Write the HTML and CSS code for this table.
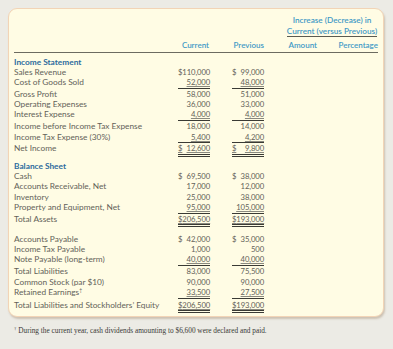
FILE: index.html
```html
<!DOCTYPE html>
<html>
<head>
<meta charset="utf-8">
<link rel="stylesheet" href="styles.css">
</head>
<body>
<div class="card">
  <div class="row top">
    <div class="inc">Increase (Decrease) in<br><span class="cvp">Current (versus Previous)</span></div>
  </div>
  <div class="row head">
    <span></span>
    <span class="h cur">Current</span>
    <span class="h">Previous</span>
    <span class="h">Amount</span>
    <span class="h">Percentage</span>
  </div>

  <div class="row sec"><span class="lbl">Income Statement</span></div>
  <div class="row"><span>Sales Revenue</span><span class="n"><i>$</i><b>110,000</b></span><span class="n"><i>$</i><b>99,000</b></span></div>
  <div class="row ul"><span>Cost of Goods Sold</span><span class="n"><b class="u">52,000</b></span><span class="n"><b class="u">48,000</b></span></div>
  <div class="row"><span>Gross Profit</span><span class="n"><b>58,000</b></span><span class="n"><b>51,000</b></span></div>
  <div class="row"><span>Operating Expenses</span><span class="n"><b>36,000</b></span><span class="n"><b>33,000</b></span></div>
  <div class="row ul"><span>Interest Expense</span><span class="n"><b class="u">4,000</b></span><span class="n"><b class="u">4,000</b></span></div>
  <div class="row"><span>Income before Income Tax Expense</span><span class="n"><b>18,000</b></span><span class="n"><b>14,000</b></span></div>
  <div class="row ul"><span>Income Tax Expense (30%)</span><span class="n"><b class="u">5,400</b></span><span class="n"><b class="u">4,200</b></span></div>
  <div class="row dbl ni"><span>Net Income</span><span class="n"><i class="u">$</i><b class="u">12,600</b></span><span class="n"><i class="u">$</i><b class="u">9,800</b></span></div>

  <div class="row sec"><span class="lbl">Balance Sheet</span></div>
  <div class="row"><span>Cash</span><span class="n"><i>$</i><b>69,500</b></span><span class="n"><i>$</i><b>38,000</b></span></div>
  <div class="row"><span>Accounts Receivable, Net</span><span class="n"><b>17,000</b></span><span class="n"><b>12,000</b></span></div>
  <div class="row"><span>Inventory</span><span class="n"><b>25,000</b></span><span class="n"><b>38,000</b></span></div>
  <div class="row ul"><span>Property and Equipment, Net</span><span class="n"><b class="u">95,000</b></span><span class="n"><b class="u">105,000</b></span></div>
  <div class="row dbl ta"><span>Total Assets</span><span class="n"><i class="u">$</i><b class="u">206,500</b></span><span class="n"><i class="u">$</i><b class="u">193,000</b></span></div>

  <div class="row"><span>Accounts Payable</span><span class="n"><i>$</i><b>42,000</b></span><span class="n"><i>$</i><b>35,000</b></span></div>
  <div class="row"><span>Income Tax Payable</span><span class="n"><b>1,000</b></span><span class="n"><b>500</b></span></div>
  <div class="row ul"><span>Note Payable (long-term)</span><span class="n"><b class="u">40,000</b></span><span class="n"><b class="u">40,000</b></span></div>
  <div class="row"><span>Total Liabilities</span><span class="n"><b>83,000</b></span><span class="n"><b>75,500</b></span></div>
  <div class="row"><span>Common Stock (par $10)</span><span class="n"><b>90,000</b></span><span class="n"><b>90,000</b></span></div>
  <div class="row ul"><span>Retained Earnings<sup>†</sup></span><span class="n"><b class="u">33,500</b></span><span class="n"><b class="u">27,500</b></span></div>
  <div class="row dbl tl"><span>Total Liabilities and Stockholders’ Equity</span><span class="n"><i class="u">$</i><b class="u">206,500</b></span><span class="n"><i class="u">$</i><b class="u">193,000</b></span></div>
</div>
<p class="foot"><sup>†</sup> During the current year, cash dividends amounting to $6,600 were declared and paid.</p>
</body>
</html>
```

FILE: styles.css
```css
html, body {
  margin: 0;
  padding: 0;
  background: #ecebe5;
}
body {
  padding: 8px 0 0 8px;
  font-family: Lato, "Open Sans", sans-serif;
  font-size: 8.3px;
  color: #636259;
}
.card {
  box-sizing: border-box;
  width: 376px;
  height: 309px;
  background: #fffce4;
  border: 1.5px solid #f2d4b6;
  border-radius: 9px;
  box-shadow: 1px 2px 2px rgba(150, 120, 90, 0.35);
  padding: 6px 0 0 5px;
}
.row {
  display: grid;
  grid-template-columns: 164px 32px 54px 53px 61px;
  line-height: 10.3px;
  height: 10.3px;
  white-space: nowrap;
}
.row.top {
  height: auto;
}
.inc {
  grid-column: 4 / 6;
  justify-self: end;
  width: 94px;
  margin-right: -1px;
  text-align: center;
  color: #3f9ac6;
  font-size: 8.2px;
  line-height: 11px;
  font-weight: 600;
}
.cvp {
  display: inline-block;
  border-bottom: 1px solid #5a5a50;
  line-height: 10px;
}
.row.head {
  margin-top: 3px;
  height: 11px;
  line-height: 11px;
  border-bottom: 1.6px solid #6c6b60;
  padding-bottom: 1px;
  width: 364px;
}
.h {
  color: #3f9ac6;
  font-size: 8px;
  font-weight: 600;
  text-align: right;
}
.h.cur { padding-right: 1px; }
.row.sec {
  margin-top: 3.5px;
}
.lbl {
  color: #2d6b9d;
  font-weight: 700;
}
.n {
  justify-self: end;
  width: 32px;
  display: flex;
  justify-content: space-between;
  font-size: 7.7px;
  letter-spacing: -0.1px;
}
.n i, .n b {
  font-style: normal;
  font-weight: 400;
}
.n b { margin-left: auto; }
.u {
  text-decoration: underline;
  text-decoration-color: #8a897f;
  text-underline-offset: 1px;
}
.row.ul {
  height: 11.8px;
}
.row.ul .n {
  border-bottom: 1px solid #3a3a34;
  height: 10.8px;
}
.row.dbl {
  height: 14px;
}
.row.dbl .n {
  border-bottom: 3px double #3a3a34;
  height: 10.6px;
}
.row.ta {
  margin-bottom: 7px;
  height: 13px;
}
.row.tl {
  margin-top: 1px;
}
sup {
  font-size: 5px;
  line-height: 0;
  vertical-align: 3px;
}
.foot {
  margin: 9px 0 0 6px;
  font-family: "Liberation Serif", serif;
  font-size: 7.3px;
  color: #3a3a36;
}
```
